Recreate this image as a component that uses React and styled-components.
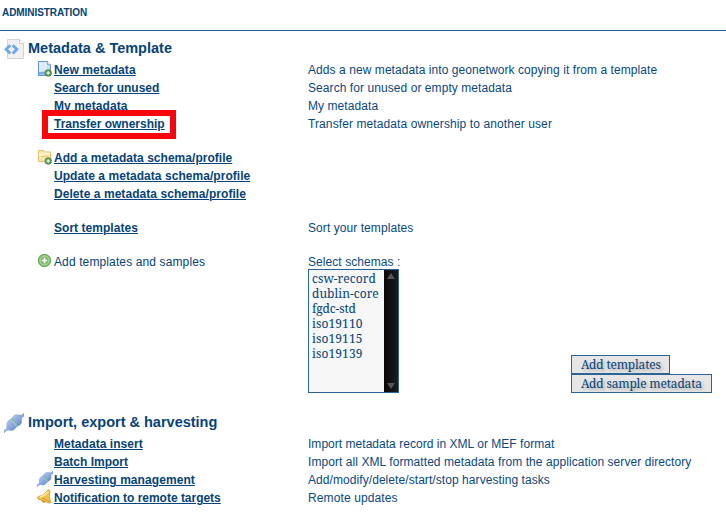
import React from "react";
import styled, { createGlobalStyle } from "styled-components";

const Global = createGlobalStyle`
  * { box-sizing: border-box; }
  body { margin: 0; background: #fff; overflow: hidden; }
`;

const Page = styled.main`
  width: 726px;
  height: 519px;
  overflow: hidden;
  background: #fff;
  color: #064377;
  font: 12px/18px "Liberation Sans", Arial, sans-serif;
  white-space: nowrap;
`;

const Header = styled.header`
  height: 31px;
  padding: 4px 2px 0;
  border-bottom: 1px solid #2a6496;
  font-size: 10px;
  font-weight: bold;
  letter-spacing: -0.06px;
`;

const Section = styled.section`
  padding-bottom: 12px;
`;

const Heading = styled.h2`
  display: flex;
  align-items: center;
  height: 30px;
  margin: 0;
  padding: 5px 0 0 4px;
  gap: 4px;
  font-size: 14.5px;
  line-height: 18px;
  svg { flex: none; }
`;

const HeadingText = styled.span`
  padding-bottom: 1px;
`;

const Row = styled.div`
  display: grid;
  grid-template-columns: 16px 254px 263px 1fr;
  align-items: start;
  padding-left: 38px;
  margin-top: ${(p) => (p.$gap ? "16px" : "0")};
  min-height: 18px;
`;

const IconCell = styled.span`
  height: 18px;
  svg { display: block; margin-left: -1px; }
`;

const Label = styled.div`
  position: relative;
  height: 18px;
  letter-spacing: 0.12px;
`;

const Link = styled.a`
  color: inherit;
  font-weight: bold;
  letter-spacing: ${(p) => p.$spacing || 0}px;
  text-decoration: underline;
  text-decoration-thickness: 1px;
  text-underline-offset: 1px;
`;

const Highlight = styled.span`
  position: absolute;
  left: -12px;
  top: -5px;
  width: 134px;
  height: 29px;
  border: 6px solid #f8060c;
`;

const Description = styled.div`
  color: #0a4881;
  letter-spacing: ${(p) => p.$spacing ?? 0.07}px;
`;

const ListBox = styled.div`
  display: flex;
  width: 91px;
  height: 124px;
  margin-top: -2px;
  border: 1px solid #2a6496;
  background: #f7f7f7;
`;

const Options = styled.ul`
  flex: 1;
  margin: 0;
  padding: 1px 0 0 3px;
  list-style: none;
  font: 12px/15px "Noto Serif", "Droid Serif", "DejaVu Serif Condensed", "DejaVu Serif", serif;
  font-stretch: condensed;
`;

const Option = styled.li`
  height: 15px;
  letter-spacing: ${(p) => p.$spacing || 0}px;
`;

const ScrollBar = styled.div`
  display: flex;
  flex-direction: column;
  justify-content: space-between;
  align-items: center;
  width: 14px;
  padding: 3px 0;
  background: linear-gradient(90deg, #080808, #1c1c1c);
`;

const Buttons = styled.div`
  display: flex;
  flex-direction: column;
  align-items: flex-start;
  align-self: end;
`;

const Button = styled.button`
  width: ${(p) => p.$width}px;
  height: 19px;
  padding: 0 0 0 9px;
  border: 1px solid #2a6496;
  background: #e6e6e6;
  color: #064377;
  font: 12px/16px "Noto Serif", "Droid Serif", "DejaVu Serif Condensed", "DejaVu Serif", serif;
  font-stretch: condensed;
  letter-spacing: -0.17px;
  text-align: left;
  text-shadow: 2px 2px 3px #aaa;
`;

const Plus = () => (
  <g>
    <circle cx="11.2" cy="12" r="3.3" fill="#5b9c50" stroke="#4b8043" strokeWidth=".7" />
    <path d="M11.2 10.2v3.6M9.4 12h3.6" stroke="#fff" strokeWidth="1.2" />
  </g>
);

const CodeIcon = () => (
  <svg width="20" height="20" viewBox="0 0 20 20">
    <path d="M3.5.5h12l4 4v15h-16z" fill="#f1f1f3" stroke="#d3d3d6" />
    <path d="M15.5.5v4h4" fill="#fff" stroke="#cfcfcf" />
    <path d="M6.3 6.2 2.1 10.3l4.2 4.1M8.7 6.2l4.2 4.1-4.2 4.1" fill="none" stroke="#69a9ed" strokeWidth="2.8" />
  </svg>
);

const DocIcon = () => (
  <svg width="16" height="16" viewBox="0 0 16 16">
    <path d="M1.5.5h9l3 3v11h-12z" fill="#c1dcf5" stroke="#6492c6" />
    <path d="M2 1h8v7L2 11z" fill="#dcecfb" />
    <path d="M10.5.5v3h3" fill="#fff" stroke="#6492c6" strokeWidth=".7" />
    <path d="M2 11h9v2.5H2z" fill="#75aee2" />
    <Plus />
  </svg>
);

const FolderIcon = () => (
  <svg width="16" height="16" viewBox="0 0 16 16">
    <path d="M1.5 12.5v-11h5l1 1.5h6v9.5z" fill="#fae6a5" stroke="#e4c170" />
    <path d="M2 5.5h4l1-1h6" fill="none" stroke="#fffbe3" strokeWidth="1.3" />
    <path d="M4 7.5h7" stroke="#e9c878" />
    <Plus />
  </svg>
);

const AddIcon = () => (
  <svg width="15" height="15" viewBox="0 0 15 15">
    <circle cx="7.5" cy="7.5" r="6.2" fill="#81bf6b" stroke="#60a653" />
    <circle cx="7.5" cy="7.5" r="4.5" fill="#80bd72" stroke="#b4dca5" />
    <path d="M7.5 4.8v5.4M4.8 7.5h5.4" stroke="#fff" strokeWidth="1.5" />
  </svg>
);

const PlugIcon = ({ size }) => (
  <svg width={size} height={size} viewBox="0 0 20 20">
    <defs>
      <linearGradient id={`plug${size}`} x1="0" y1="0" x2="1" y2="1">
        <stop offset=".2" stopColor="#b9cdec" />
        <stop offset=".55" stopColor="#86a5dc" />
        <stop offset=".8" stopColor="#5678bb" />
      </linearGradient>
    </defs>
    <path d="M0 17.2c2.2-.6 3-1.8 2.8-4.2C2.5 9.4 4 7.7 7 6.1c1.1-.6 1.5-1.5 2.3-2.7 1.6-1.9 3.4-1.8 5.8-1.4 2.3.4 3.4-.4 4.9-2v3.2c-2.2.8-2.7 2-2.4 4.1.5 3.3-1.2 4.8-4 6-1.5.7-1.9 1.5-2.9 2.8-1.4 1.7-3.4 1.5-5.4 1.1-2.2-.4-3.4.7-5.3 2.8z" fill={`url(#plug${size})`} stroke="#829ac7" strokeWidth=".5" />
    <path d="M7.3 5.8c2.9 1.7 5 4 6.1 7.1" fill="none" stroke="#79ba91" strokeWidth="1.3" />
    <path d="M6.5 7.1c2.8 1.4 4.8 3.7 5.7 6.4" fill="none" stroke="#bad4e4" strokeWidth=".8" />
  </svg>
);

const BellIcon = () => (
  <svg width="16" height="16" viewBox="0 0 16 16">
    <path d="M10.8 1.1c1.4-.7 2.6.2 2.1 1.6-.8 3.2-.6 6.5.6 9.7.5 1.6-.7 2.2-2.2 1.4C8 12.4 4.8 11 1.4 10.2.1 9.3.2 8 1.6 7.4 5.4 6.6 8.4 4.6 10.8 1.1z" fill="#efbf4b" stroke="#d09a37" strokeWidth=".8" />
    <path d="M3 8c3.7-.8 6.3-2.7 8.4-5.2" fill="none" stroke="#ffe9a5" strokeWidth="1.7" />
    <path d="M5 9.3c2.8.5 5 1.7 7.2 3.5" fill="none" stroke="#d69432" />
    <path d="M5 11.3c.1 2.1 1.9 3 3.5 1.5" fill="#d59125" stroke="#c88b31" strokeWidth=".7" />
  </svg>
);

const Arrow = ({ down }) => (
  <svg width="8" height="6" viewBox="0 0 8 6">
    <path d={down ? "M0 0h8L4 6z" : "M0 6h8L4 0z"} fill="#555" />
  </svg>
);

const metadataRows = [
  { label: "New metadata", text: "Adds a new metadata into geonetwork copying it from a template", icon: <DocIcon />, spacing: 0.08 },
  { label: "Search for unused", text: "Search for unused or empty metadata" },
  { label: "My metadata", text: "My metadata", spacing: 0.08 },
  { label: "Transfer ownership", text: "Transfer metadata ownership to another user", highlight: true, textSpacing: 0.1 },
  { label: "Add a metadata schema/profile", gap: true, icon: <FolderIcon />, spacing: 0.03 },
  { label: "Update a metadata schema/profile", spacing: 0.05 },
  { label: "Delete a metadata schema/profile", spacing: 0.06 },
  { label: "Sort templates", text: "Sort your templates", gap: true, spacing: 0.04 },
];

const harvestRows = [
  { label: "Metadata insert", text: "Import metadata record in XML or MEF format", spacing: 0.05, textSpacing: 0.03 },
  { label: "Batch Import", text: "Import all XML formatted metadata from the application server directory" },
  { label: "Harvesting management", text: "Add/modify/delete/start/stop harvesting tasks", icon: <PlugIcon size={16} />, spacing: 0.07 },
  { label: "Notification to remote targets", text: "Remote updates", icon: <BellIcon />, textSpacing: 0.12, spacing: -0.02 },
];

const schemas = ["csw-record", "dublin-core", "fgdc-std", "iso19110", "iso19115", "iso19139"];

const ActionRow = ({ label, text, icon, gap, highlight, spacing, textSpacing }) => (
  <Row $gap={gap}>
    <IconCell>{icon}</IconCell>
    <Label>
      <Link $spacing={spacing}>{label}</Link>
      {highlight && <Highlight />}
    </Label>
    <Description $spacing={textSpacing}>{text}</Description>
  </Row>
);

export default function App() {
  return (
    <Page>
      <Global />
      <Header>ADMINISTRATION</Header>
      <Section>
        <Heading><CodeIcon /><HeadingText>Metadata &amp; Template</HeadingText></Heading>
        {metadataRows.map((r) => <ActionRow key={r.label} {...r} />)}
        <Row $gap>
          <IconCell><AddIcon /></IconCell>
          <Label>Add templates and samples</Label>
          <div>
            <Description>Select schemas :</Description>
            <ListBox>
              <Options>
                {schemas.map((s) => (
                  <Option key={s} $spacing={s.startsWith("iso") ? 0.1 : s === "fgdc-std" ? -0.15 : 0.05}>{s}</Option>
                ))}
              </Options>
              <ScrollBar><Arrow /><Arrow down /></ScrollBar>
            </ListBox>
          </div>
          <Buttons>
            <Button $width={99}>Add templates</Button>
            <Button $width={141}>Add sample metadata</Button>
          </Buttons>
        </Row>
      </Section>
      <Section>
        <Heading><PlugIcon size={20} /><HeadingText>Import, export &amp; harvesting</HeadingText></Heading>
        {harvestRows.map((r) => <ActionRow key={r.label} {...r} />)}
      </Section>
    </Page>
  );
}
